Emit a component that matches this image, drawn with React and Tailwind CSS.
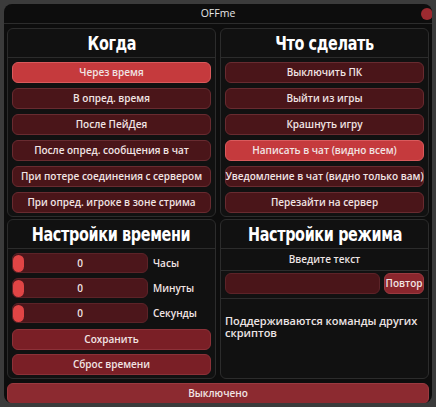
import { useState } from 'react';

const whenOptions = [
    'Через время',
    'В опред. время',
    'После ПейДея',
    'После опред. сообщения в чат',
    'При потере соединения с сервером',
    'При опред. игроке в зоне стрима',
];

const actionOptions = [
    'Выключить ПК',
    'Выйти из игры',
    'Крашнуть игру',
    'Написать в чат (видно всем)',
    'Уведомление в чат (видно только вам)',
    'Перезайти на сервер',
];

const body = { fontFamily: '"Open Sans", "DejaVu Sans", sans-serif' };
const head = { fontFamily: '"DejaVu Sans", "Liberation Sans", sans-serif' };

const Heading = ({ children }) => (
    <div className="h-[29px] flex items-center justify-center border-b border-[#2c2c2c] overflow-hidden">
        <span style={head} className="inline-block scale-x-[0.72] text-[20px] font-bold text-white whitespace-nowrap tracking-tight">
            {children}
        </span>
    </div>
);

const OptionButton = ({ label, active, onClick }) => (
    <button
        onClick={onClick}
        className={`h-[21px] w-full rounded-md border text-[10px] font-semibold text-[#f1e4e4] flex items-center justify-center whitespace-nowrap ${active
            ? 'bg-[#c53a3d] border-[#d95a5c]'
            : 'bg-[#4a1519] border-[#682b30]'
            }`}
    >
        {label}
    </button>
);

const TimeRow = ({ label }) => (
    <div className="flex items-center gap-[5px] h-[20px]">
        <div className="relative w-[136px] h-[20px] rounded-md bg-[#4c161b] border border-[#5c2328] flex items-center justify-center">
            <div className="absolute left-0 top-[1px] w-[11px] h-[17px] rounded-md bg-[#e04545]"></div>
            <span className="text-[10px] font-semibold text-[#f1e4e4]">0</span>
        </div>
        <span className="text-[10px] font-semibold text-[#f1e4e4]">{label}</span>
    </div>
);

export default function App() {
    const [when, setWhen] = useState(0);
    const [action, setAction] = useState(3);

    return (
        <div style={body} className="w-[436px] h-[407px] bg-[#3b3b3b] p-1">
            <div className="h-full rounded-lg bg-[#0d0d0d] flex flex-col overflow-hidden">
                {/* Title bar */}
                <div className="relative h-[20px] shrink-0 flex items-center justify-center border-b border-[#2c2c2c]">
                    <span className="text-[10.5px] text-[#e6e6e6]">OFFme</span>
                    <div className="absolute -right-[1px] top-[4px] w-[12px] h-[12px] rounded-full bg-[#9c2a30]"></div>
                </div>

                <div className="flex-1 px-[3px] pt-[4px] pb-[1px] flex flex-col gap-[2px]">
                    <div className="grid grid-cols-2 gap-[4px]">
                        {/* Когда */}
                        <div className="h-[189px] rounded-md border border-[#2c2c2c] bg-[#111111]">
                            <Heading>Когда</Heading>
                            <div className="px-[4px] pt-[4px] flex flex-col gap-[5px]">
                                {whenOptions.map((o, i) => (
                                    <OptionButton key={o} label={o} active={when === i} onClick={() => setWhen(i)} />
                                ))}
                            </div>
                        </div>
                        {/* Что сделать */}
                        <div className="h-[189px] rounded-md border border-[#2c2c2c] bg-[#111111]">
                            <Heading>Что сделать</Heading>
                            <div className="px-[4px] pt-[4px] flex flex-col gap-[5px]">
                                {actionOptions.map((o, i) => (
                                    <OptionButton key={o} label={o} active={action === i} onClick={() => setAction(i)} />
                                ))}
                            </div>
                        </div>
                    </div>

                    <div className="grid grid-cols-2 gap-[4px]">
                        {/* Настройки времени */}
                        <div className="h-[160px] rounded-md border border-[#2c2c2c] bg-[#111111]">
                            <Heading>Настройки времени</Heading>
                            <div className="px-[4px] pt-[4px] flex flex-col gap-[5px]">
                                <TimeRow label="Часы" />
                                <TimeRow label="Минуты" />
                                <TimeRow label="Секунды" />
                                <button className="mt-[1px] h-[21px] w-full rounded-md bg-[#7a1f26] border border-[#8c3138] text-[10px] font-semibold text-[#f1e4e4]">
                                    Сохранить
                                </button>
                                <button className="-mt-[1px] h-[21px] w-full rounded-md bg-[#7a1f26] border border-[#8c3138] text-[10px] font-semibold text-[#f1e4e4]">
                                    Сброс времени
                                </button>
                            </div>
                        </div>
                        {/* Настройки режима */}
                        <div className="h-[160px] rounded-md border border-[#2c2c2c] bg-[#111111]">
                            <Heading>Настройки режима</Heading>
                            <div className="h-[22px] flex items-center justify-center border-b border-[#2c2c2c]">
                                <span className="text-[10px] font-semibold text-[#ece4e4]">Введите текст</span>
                            </div>
                            <div className="flex items-center gap-[4px] px-[4px] pt-[2px] pb-[4px] border-b border-[#2c2c2c]">
                                <div className="flex-1 h-[21px] rounded-md bg-[#4a1519] border border-[#5c2328]"></div>
                                <button className="h-[21px] w-[40px] rounded-md bg-[#8a262d] border border-[#9a3a40] text-[10px] font-semibold text-[#f1e4e4]">
                                    Повтор
                                </button>
                            </div>
                            <p className="px-[4px] pt-[16px] text-[11px] font-semibold leading-[12px] text-[#ece4e4]">
                                Поддерживаются команды других скриптов
                            </p>
                        </div>
                    </div>

                    <button className="mt-[2px] h-[21px] w-full rounded-md bg-[#8c2a30] border border-[#9a3a40] text-[10px] font-semibold text-[#f1e4e4]">
                        Выключено
                    </button>
                </div>
            </div>
        </div>
    );
}
